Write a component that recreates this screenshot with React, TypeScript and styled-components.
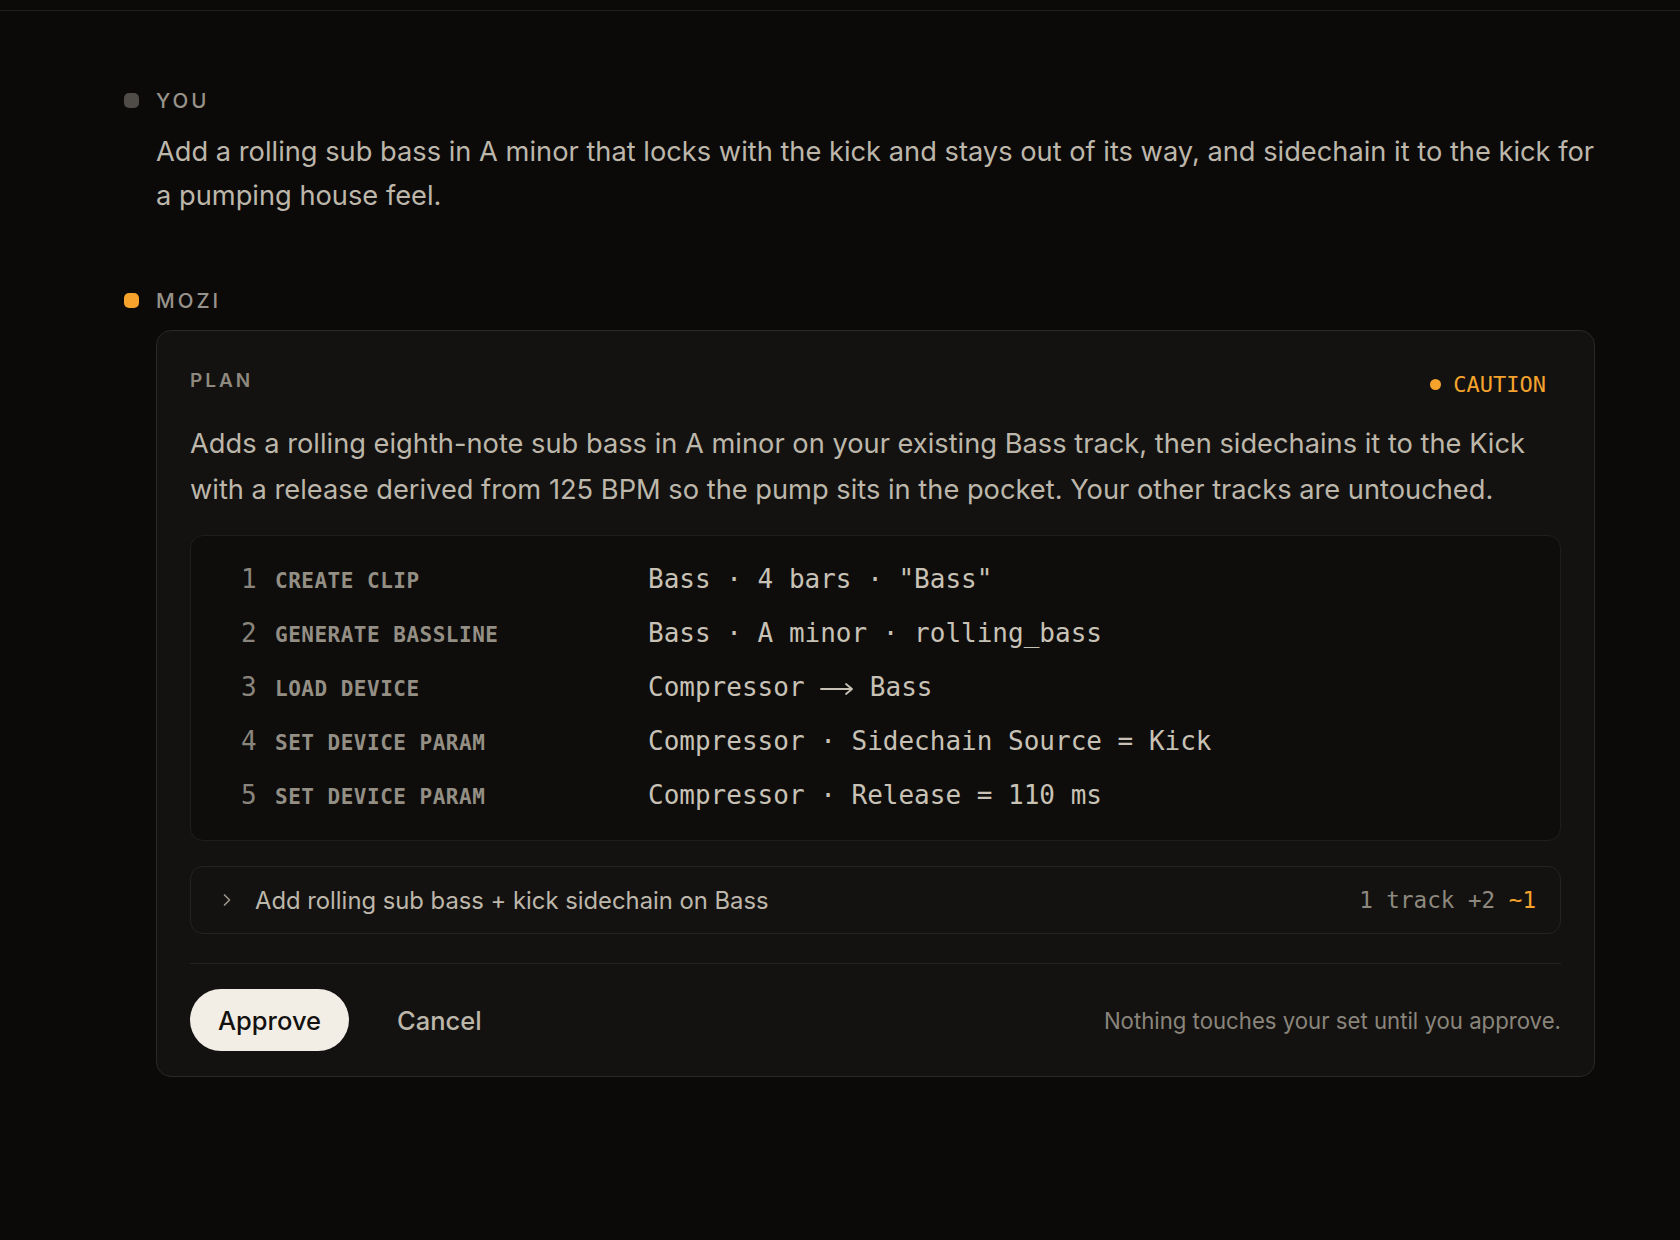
import styled, { createGlobalStyle } from 'styled-components';
import { ChevronRight } from 'lucide-react';

const GlobalStyle = createGlobalStyle`
  html, body {
    margin: 0;
    padding: 0;
    background: #0b0a09;
  }
  body {
    font-family: Inter, "Noto Sans", sans-serif;
    -webkit-font-smoothing: antialiased;
  }
`;

const Page = styled.div`
  min-height: 1240px;
  background: #0b0a09;
  color: #c4beb2;
`;

const TopBar = styled.div`
  height: 10px;
  border-bottom: 1px solid #1f1e1c;
`;

const Thread = styled.div`
  padding: 75px 85px 0 124px;
  display: flex;
  flex-direction: column;
  gap: 68px;
`;

const Message = styled.div`
  display: flex;
  flex-direction: column;
`;

const Author = styled.div`
  display: flex;
  align-items: center;
  gap: 17px;
  height: 28px;
  font-size: 20.5px;
  font-weight: 500;
  letter-spacing: 3px;
  color: #97928a;
`;

const Dot = styled.span<{ $tone: 'user' | 'bot' }>`
  width: 15px;
  height: 15px;
  border-radius: 5px;
  background: ${(p) => (p.$tone === 'bot' ? '#f5a32c' : '#4f4c47')};
`;

const Body = styled.div`
  margin-left: 32px;
`;

const UserText = styled.p`
  margin: 16px 0 0;
  font-size: 27.25px;
  line-height: 44px;
  color: #bdb7ab;
`;

const Card = styled.div`
  margin-top: 16px;
  background: #131210;
  border: 1px solid #2b2926;
  border-radius: 15px;
  padding: 35px 33px 25px;
`;

const CardHead = styled.div`
  display: flex;
  justify-content: space-between;
  align-items: center;
  height: 28px;
`;

const PlanLabel = styled.span`
  font-size: 19px;
  font-weight: 600;
  letter-spacing: 3px;
  color: #8e897f;
`;

const Risk = styled.span`
  display: flex;
  align-items: center;
  gap: 12px;
  margin: 8px 15px 0 0;
  font-family: "DejaVu Sans Mono", "Liberation Mono", monospace;
  font-size: 22px;
  color: #f5a32c;

  &::before {
    content: '';
    width: 11px;
    height: 11px;
    border-radius: 50%;
    background: #f5a32c;
  }
`;

const Description = styled.p`
  margin: 27px 0 0;
  font-size: 27.25px;
  line-height: 46px;
  color: #bdb7ab;
`;

const Steps = styled.div`
  margin-top: 22px;
  background: #0e0d0c;
  border: 1px solid #1f1e1c;
  border-radius: 13px;
  padding: 16px 49px 18px 50px;
`;

const StepRow = styled.div`
  display: grid;
  grid-template-columns: 16px 355px 1fr;
  column-gap: 18px;
  align-items: baseline;
  height: 54px;
  line-height: 54px;
  font-family: "DejaVu Sans Mono", "Liberation Mono", monospace;
`;

const StepNum = styled.span`
  font-size: 26px;
  color: #8a857c;
`;

const StepName = styled.span`
  font-size: 21px;
  font-weight: 700;
  letter-spacing: 0.5px;
  color: #948f85;
`;

const StepValue = styled.span`
  font-size: 26px;
  color: #c8c2b6;
  white-space: pre;
`;

const Arrow = styled.svg`
  display: inline-block;
  width: 48px;
  height: 14px;
  margin: 0 -7px;
  vertical-align: 0;
`;

const Summary = styled.div`
  margin-top: 25px;
  height: 66px;
  border: 1px solid #252321;
  border-radius: 13px;
  display: flex;
  align-items: center;
  padding: 0 24px 0 26px;
  gap: 18px;
  color: #bdb7ab;
`;

const SummaryText = styled.span`
  flex: 1;
  font-size: 23.8px;
`;

const Diff = styled.span`
  font-family: "DejaVu Sans Mono", "Liberation Mono", monospace;
  font-size: 22.6px;
  color: #8e897f;
`;

const Changed = styled.span`
  color: #f5a32c;
`;

const Divider = styled.div`
  margin-top: 29px;
  height: 1px;
  background: #252321;
`;

const Actions = styled.div`
  margin-top: 25px;
  display: flex;
  align-items: center;
  gap: 48px;
`;

const Button = styled.button<{ $primary?: boolean }>`
  height: 62px;
  padding: 0 ${(p) => (p.$primary ? '28px' : '0')};
  border: none;
  border-radius: 31px;
  font-family: Inter, sans-serif;
  font-size: 25.5px;
  font-weight: 500;
  background: ${(p) => (p.$primary ? '#f2eee6' : 'transparent')};
  color: ${(p) => (p.$primary ? '#141210' : '#bdb7ab')};
`;

const Note = styled.span`
  margin-left: auto;
  font-size: 22.2px;
  color: #8a857c;
`;

const LongArrow = () => (
  <Arrow viewBox="0 0 48 14" fill="none" stroke="#c8c2b6" strokeWidth="1.8">
    <path d="M8 7h31M33 2l6 5-6 5" strokeLinecap="round" strokeLinejoin="round" />
  </Arrow>
);

const steps = [
  { name: 'CREATE CLIP', value: <>Bass · 4 bars · "Bass"</> },
  { name: 'GENERATE BASSLINE', value: <>Bass · A minor · rolling_bass</> },
  { name: 'LOAD DEVICE', value: <>Compressor <LongArrow /> Bass</> },
  { name: 'SET DEVICE PARAM', value: <>Compressor · Sidechain Source = Kick</> },
  { name: 'SET DEVICE PARAM', value: <>Compressor · Release = 110 ms</> },
];

export default function App() {
  return (
    <Page>
      <GlobalStyle />
      <TopBar />
      <Thread>
        <Message>
          <Author>
            <Dot $tone="user" />
            YOU
          </Author>
          <Body>
            <UserText>
              Add a rolling sub bass in A minor that locks with the kick and stays out of its way, and
              sidechain it to the kick for a pumping house feel.
            </UserText>
          </Body>
        </Message>

        <Message>
          <Author>
            <Dot $tone="bot" />
            MOZI
          </Author>
          <Body>
            <Card>
              <CardHead>
                <PlanLabel>PLAN</PlanLabel>
                <Risk>CAUTION</Risk>
              </CardHead>
              <Description>
                Adds a rolling eighth-note sub bass in A minor on your existing Bass track, then
                sidechains it to the Kick with a release derived from 125 BPM so the pump sits in the
                pocket. Your other tracks are untouched.
              </Description>

              <Steps>
                {steps.map((s, i) => (
                  <StepRow key={i}>
                    <StepNum>{i + 1}</StepNum>
                    <StepName>{s.name}</StepName>
                    <StepValue>{s.value}</StepValue>
                  </StepRow>
                ))}
              </Steps>

              <Summary>
                <ChevronRight size={20} strokeWidth={2} color="#9a958b" />
                <SummaryText>Add rolling sub bass + kick sidechain on Bass</SummaryText>
                <Diff>
                  1 track +2 <Changed>~1</Changed>
                </Diff>
              </Summary>

              <Divider />

              <Actions>
                <Button $primary>Approve</Button>
                <Button>Cancel</Button>
                <Note>Nothing touches your set until you approve.</Note>
              </Actions>
            </Card>
          </Body>
        </Message>
      </Thread>
    </Page>
  );
}
